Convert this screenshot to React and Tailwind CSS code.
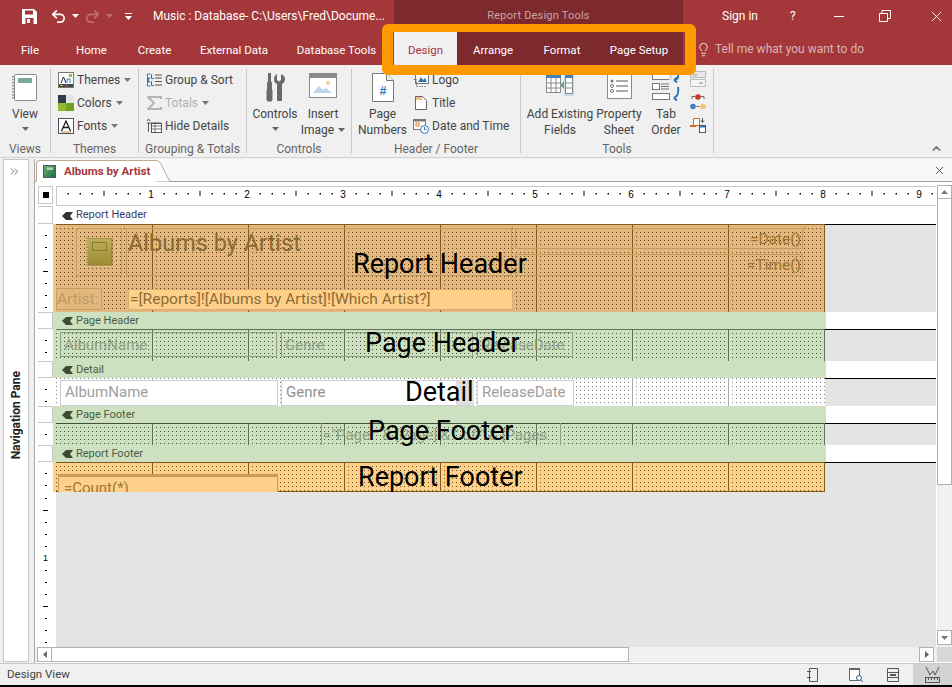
import { Undo2, Redo2, Lightbulb, X, ChevronsRight, ChevronUp } from "lucide-react";

const Caret = ({ className = "" }) => (
    <svg width="7" height="4" viewBox="0 0 7 4" className={className}>
        <path d="M0 0h7L3.5 4z" fill="currentColor" />
    </svg>
);

// ======= ribbon icons ======
const ViewIcon = () => (
    <svg width="26" height="30" viewBox="0 0 26 30">
        <rect x="2.5" y="1.5" width="22" height="26" rx="1" fill="#fff" stroke="#8a8a8a" />
        <rect x="6" y="5" width="14" height="5" fill="#77aa99" />
        <path d="M1 3v24" stroke="#999" strokeWidth="2" strokeDasharray="1.5 1.5" />
    </svg>
);
const ThemesIcon = () => (
    <svg width="16" height="16" viewBox="0 0 16 16">
        <rect x="0.5" y="0.5" width="15" height="15" fill="#fff" stroke="#777" />
        <path d="M1 12h14v3H1z" fill="#3c4a52" />
        <path d="M3 11l2.5-6L8 11" fill="none" stroke="#222" />
        <path d="M9 11V7h3v4" fill="none" stroke="#2f7fbf" />
        <path d="M11 2h3v3h-3z" fill="#8fbc3a" />
        <path d="M2 13h3v1H2z" fill="#e8b030" />
        <path d="M7 13h3v1H7z" fill="#d04a2a" />
    </svg>
);
const ColorsIcon = () => (
    <svg width="16" height="16" viewBox="0 0 16 16">
        <path d="M0 0h8v8H0z" fill="#2f3f48" />
        <path d="M8 0h8v8H8z" fill="#e4e4e4" />
        <path d="M0 8h8v8H0z" fill="#8fbc2a" />
        <path d="M8 8h8v8H8z" fill="#6fa020" />
    </svg>
);
const FontsIcon = () => (
    <svg width="16" height="16" viewBox="0 0 16 16">
        <rect x="0.5" y="0.5" width="15" height="15" fill="#fff" stroke="#44546a" />
        <path d="M3.5 13L8 3l4.5 10M5.5 9.5h5" fill="none" stroke="#1a1a1a" strokeWidth="1.3" />
        <path d="M3 14h10" stroke="#c8892a" />
    </svg>
);
const GroupSortIcon = () => (
    <svg width="15" height="14" viewBox="0 0 15 14">
        <path d="M3.5 1H.5v12h3M3.5 5h-2v4h2" fill="none" stroke="#2f75b5" />
        <path d="M5 1.5h-.5v4H7M5 8.5h-.5v4H7" fill="none" stroke="#2f75b5" />
        <path d="M8 2h7M8 5h7M8 8.500h7M8 12h7" stroke="#555" />
    </svg>
);
const TotalsIcon = () => (
    <svg width="15" height="14" viewBox="0 0 15 14">
        <path d="M14 3V1H1l6 6-6 6h13v-2" fill="none" stroke="#b4b4b4" strokeWidth="2" />
    </svg>
);
const HideDetailsIcon = () => (
    <svg width="16" height="16" viewBox="0 0 16 16">
        <path d="M1 5h14M2.500 5v9M1 3l1.500-2L4 3" fill="none" stroke="#555" />
        <rect x="5.500" y="5.500" width="10" height="9" fill="#fff" stroke="#555" />
        <path d="M6 8h9M6 11h9M9 6v8" stroke="#777" />
    </svg>
);
const ControlsIcon = () => (
    <svg width="20" height="29" viewBox="0 0 20 29">
        <path d="M3 0h3v8l1 2v7H2v-7l1-2z" fill="#6a6a6a" />
        <path d="M1.500 17h6v9.500l-1 2h-4l-1-2z" fill="#6a6a6a" />
        <path d="M12 1v6l2 1.500L16 7V1c3 1 4 3 4 5 0 3-1.500 4-3 5v17h-5V11c-2-1-3-2-3-5 0-2 1-4 3-5z" fill="#6a6a6a" />
    </svg>
);
const InsertImageIcon = () => (
    <svg width="28" height="26" viewBox="0 0 28 26">
        <rect x="0.500" y="0.500" width="27" height="24" fill="#fff" stroke="#8a8a8a" />
        <rect x="1" y="1" width="26" height="4" fill="#8a8a8a" />
        <path d="M4 20l6-7 4 4 3-2 6 5z" fill="#bcd3ea" />
        <circle cx="19" cy="10" r="2.200" fill="#f2d6a2" />
    </svg>
);
const PageNumbersIcon = () => (
    <svg width="22" height="29" viewBox="0 0 22 29">
        <path d="M.500.500h14l7 7v21H.500z" fill="#fff" stroke="#7a7a7a" />
        <path d="M14.500.500v7h7" fill="#f0f0f0" stroke="#7a7a7a" />
        <text x="11" y="22" textAnchor="middle" fontSize="12" fontWeight="700" fill="#2f75b5" fontFamily="Liberation Sans">#</text>
    </svg>
);
const LogoIcon = () => (
    <svg width="16" height="14" viewBox="0 0 16 14">
        <rect x="2.500" y="1.500" width="13" height="9" fill="#fff" stroke="#777" />
        <path d="M5 9l3-5 2 3 2-2 2 4z" fill="#2f75b5" />
        <path d="M.5 6.500h3v7h9" fill="none" stroke="#777" strokeDasharray="1.500 1" />
    </svg>
);
const TitleIcon = () => (
    <svg width="12" height="14" viewBox="0 0 12 14">
        <path d="M.500.500h7l4 4v9H.500z" fill="#fff" stroke="#666" />
        <path d="M1 1h6v3H1z" fill="#f2c28a" />
    </svg>
);
const DateTimeIcon = () => (
    <svg width="16" height="16" viewBox="0 0 16 16">
        <rect x="0.500" y="1.500" width="12" height="10" fill="#fff" stroke="#777" />
        <rect x="1" y="1" width="11" height="2.500" fill="#777" />
        <rect x="3" y="5" width="3" height="3" fill="none" stroke="#e07a20" />
        <circle cx="11.500" cy="11.500" r="4" fill="#fff" stroke="#2f75b5" />
        <path d="M11.500 9v2.500h2" fill="none" stroke="#2f75b5" />
    </svg>
);
const AddFieldsIcon = () => (
    <svg width="28" height="24" viewBox="0 0 28 24">
        <rect x="0.500" y="1.500" width="14" height="18" fill="#fff" stroke="#8a8a8a" />
        <rect x="0" y="1" width="15" height="4" fill="#4a7fb5" />
        <path d="M0 10h15M0 15h15M5 5v15M10 5v15" stroke="#8a8a8a" />
        <path d="M14 12l4-4v8z" fill="#6fa890" />
        <rect x="18" y="0" width="10" height="23" fill="#c9dcec" />
        <rect x="19.500" y="1.500" width="7" height="19" fill="#fff" stroke="#8a8a8a" />
        <rect x="19" y="1" width="8" height="4" fill="#4a7fb5" />
        <path d="M20 10h6M20 15h6" stroke="#8a8a8a" />
    </svg>
);
const PropertySheetIcon = () => (
    <svg width="25" height="26" viewBox="0 0 25 26">
        <rect x="0.500" y="0.500" width="24" height="25" fill="#fff" stroke="#8a8a8a" />
        <rect x="0" y="0" width="25" height="2" fill="#4a7fb5" />
        <circle cx="5" cy="8" r="1.500" fill="#777" />
        <circle cx="5" cy="13" r="1.500" fill="none" stroke="#777" />
        <circle cx="5" cy="18" r="1.500" fill="none" stroke="#777" />
        <path d="M9 8h12M9 13h12M9 18h12" stroke="#555" />
    </svg>
);
const TabOrderIcon = () => (
    <svg width="28" height="28" viewBox="0 0 28 28">
        <rect x="0.500" y="0.500" width="17" height="6" fill="#fff" stroke="#777" />
        <rect x="17" y="0" width="3" height="7" fill="#c9dcec" />
        <rect x="0.500" y="10.500" width="7" height="6" fill="#fff" stroke="#777" />
        <path d="M9 11h8M9 13.500h8M9 16h8" stroke="#777" />
        <rect x="0.500" y="20.500" width="17" height="6" fill="#fff" stroke="#777" />
        <path d="M26 1c1 4-1 6-4 6M22 7l3-2.500M22 7l3 2.500" fill="none" stroke="#2f75b5" strokeWidth="2" />
        <path d="M26 14c1 6-1 10-4 11M22 25l3-2.500M22 25l3 2.500" fill="none" stroke="#2f75b5" strokeWidth="2" />
    </svg>
);
const Tool1Icon = () => (
    <svg width="16" height="16" viewBox="0 0 16 16">
        <rect x="0.500" y="0.500" width="15" height="6" fill="#e8e8e8" stroke="#bbb" />
        <rect x="0.500" y="8.500" width="15" height="7" fill="#f4f4f4" stroke="#bbb" />
        <rect x="3" y="3" width="4" height="2" fill="#bbb" />
        <rect x="9" y="11" width="4" height="2" fill="#bbb" />
    </svg>
);
const Tool2Icon = () => (
    <svg width="16" height="16" viewBox="0 0 16 16">
        <path d="M2 5V2.500h3M14 5V2.500h-3" fill="none" stroke="#666" />
        <circle cx="8" cy="3" r="2.800" fill="#c8372a" />
        <circle cx="3" cy="12.500" r="2.800" fill="#3f7fbf" />
        <circle cx="13" cy="12.500" r="2.800" fill="#f2c67a" />
        <path d="M6.500 12.500h3" stroke="#666" />
    </svg>
);
const Tool3Icon = () => (
    <svg width="16" height="16" viewBox="0 0 16 16">
        <path d="M3.500 1.500h6v7h-6z" fill="#fff" stroke="#e0661a" />
        <path d="M0 8h6v2H0z" fill="#e0661a" />
        <path d="M12.500 1v4M11 3.500l1.500 2 1.500-2" fill="none" stroke="#555" />
        <rect x="9.500" y="8.500" width="6" height="7" fill="#fff" stroke="#555" />
        <rect x="9.500" y="8.500" width="6" height="2" fill="#2f75b5" />
    </svg>
);

// ======= ribbon parts ======
const RibbonGroup = ({ label, width, children }) => (
    <section className={`flex flex-col h-[84px] mt-1 border-r border-[#c8c8c8] ${width}`}>
        <div className="flex-1 flex min-h-0">{children}</div>
        <p className="text-center text-[12px] leading-4 -mb-1 text-[#666] whitespace-nowrap">{label}</p>
    </section>
);

const LargeButton = ({ icon, lines, caret, inlineCaret, width }) => (
    <button className={`flex flex-col items-center text-[12px] leading-4 text-[#444] ${width}`}>
        <span className="h-[37px] pt-1 flex items-start justify-center">{icon}</span>
        {lines.map((line, i) => (
            <span key={line} className="flex items-center gap-1 whitespace-nowrap">
                {line}
                {inlineCaret && i === lines.length - 1 && <Caret className="text-[#666]" />}
            </span>
        ))}
        {caret && <Caret className="text-[#666] mt-[5px]" />}
    </button>
);

const SmallButton = ({ icon, label, caret, disabled, iconWidth = "w-4" }) => (
    <button className={`flex items-center gap-[3px] h-[23px] text-[12px] whitespace-nowrap ${disabled ? "text-[#b0b0b0]" : "text-[#444]"}`}>
        <span className={`flex justify-center ${iconWidth}`}>{icon}</span>
        <span>{label}</span>
        {caret && <Caret className="text-[#777] ml-[1px]" />}
    </button>
);

// ======= design surface ======
const gridLines = [96, 192, 288, 384, 480, 576, 672];

// the dot colour is the base, two gradient layers cover everything but one pixel of each 4px tile
const bands = {
    tan: "bg-[#5a3e1a] bg-[linear-gradient(to_right,transparent_1px,#e3b77d_1px),linear-gradient(to_bottom,transparent_1px,#e3b77d_1px)] bg-size-[4px_4px]",
    green: "bg-[#44543c] bg-[linear-gradient(to_right,transparent_1px,#cde0bf_1px),linear-gradient(to_bottom,transparent_1px,#cde0bf_1px)] bg-size-[4px_4px]",
    white: "bg-[#808080] bg-[linear-gradient(to_right,transparent_1px,#ffffff_1px),linear-gradient(to_bottom,transparent_1px,#ffffff_1px)] bg-size-[4px_4px]",
    orange: "bg-[#6a5020] bg-[linear-gradient(to_right,transparent_1px,#ffd08a_1px),linear-gradient(to_bottom,transparent_1px,#ffd08a_1px)] bg-size-[4px_4px]",
};

const RulerTicks = ({ count, longAt = 4 }) => (
    <div className="flex flex-col items-center pt-[11px] gap-[11px]">
        {Array.from({ length: count }, (_, i) => (
            <i key={i} className={`block h-px bg-black ${(i + 1) % 8 === longAt ? "w-[5px]" : "w-[2px]"}`} />
        ))}
    </div>
);

const SectionBar = ({ title, tinted, barHeight }) => (
    <div className={`flex ${barHeight}`}>
        <div className="w-[15px] shrink-0 bg-white border border-[#c8c8c8] border-l-0" />
        <div className={`w-[3px] shrink-0 ${tinted ? "bg-[#cde0bf]" : "bg-white"}`} />
        <div className={`w-[770px] shrink-0 flex items-center pl-[6px] pt-px gap-[3px] text-[11px] ${tinted ? "bg-[#cde0bf] text-[#4c5c44]" : "bg-white text-[#3c3c60]"}`}>
            <svg width="11" height="10" viewBox="0 0 11 10">
                <path d="M0 5l4-4h7L8 5l3 4H4z" fill={tinted ? "#3d4a36" : "#333"} />
            </svg>
            {title}
        </div>
        <div className="flex-1 bg-white" />
    </div>
);

const SectionBody = ({ height, tone, lineColor, ticks, edge, children, topLine = "border-black" }) => (
    <div className={`flex ${height}`}>
        <div className="w-[15px] shrink-0 bg-white">
            <RulerTicks count={ticks} />
        </div>
        <div className={`w-[3px] shrink-0 ${edge}`} />
        <div className={`relative w-[769px] shrink-0 ${bands[tone]}`}>
            {gridLines.map((x) => (
                <i key={x} className={`absolute top-0 bottom-0 w-px ${lineColor}`} style={{ left: x }} />
            ))}
            {children}
        </div>
        <div className={`flex-1 bg-[#e4e4e4] border-t ${topLine}`} />
    </div>
);

const BigLabel = ({ text, className }) => (
    <span className={`absolute z-10 text-[27px] leading-none text-black whitespace-nowrap ${className}`}>{text}</span>
);

const Horizontal = () => {
    const ticks = [];
    for (let i = 1; i <= 73; i++) {
        const x = i * 12;
        if (i % 8 === 0) continue;
        ticks.push(i % 4 === 0
            ? <rect key={i} x={x - 0.5} y="4" width="1" height="5" fill="#000" />
            : <rect key={i} x={x - 0.5} y="6" width="1.500" height="1.500" fill="#000" />);
    }
    return (
        <svg width="880" height="18" viewBox="0 0 880 18" className="block -ml-px">
            {ticks}
            {[1, 2, 3, 4, 5, 6, 7, 8, 9].map((n) => (
                <text key={n} x={n * 96 - 1} y="11" textAnchor="middle" fontSize="10" fill="#000" fontFamily="Liberation Sans">{n}</text>
            ))}
        </svg>
    );
};

const App = () => {
    return (
        <div className="w-[952px] h-[687px] relative overflow-hidden flex flex-col bg-[#f0f0f0] font-['Roboto',sans-serif]">
            {/* ======= title bar ====== */}
            <header className="h-8 flex bg-[#a4373a] text-white">
                <div className="w-[394px] flex items-center relative">
                    <svg width="15" height="15" viewBox="0 0 15 15" className="ml-[22px]">
                        <path d="M0 0h12l3 3v12H0z" fill="#fff" />
                        <path d="M3 1.500h8v4H3zM3.500 9h8v6h-8z" fill="#a4373a" />
                        <path d="M5 10h3v4H5z" fill="#fff" />
                    </svg>
                    <Undo2 size={17} strokeWidth={2.4} className="ml-[13px]" />
                    <Caret className="ml-[5px]" />
                    <Redo2 size={17} strokeWidth={2.4} className="ml-[5px] text-[#bf6d6f]" />
                    <Caret className="ml-[5px] text-[#bf6d6f]" />
                    <svg width="7" height="7" viewBox="0 0 7 7" className="ml-[12px]">
                        <path d="M0 0h7v1H0zM0 3h7L3.500 7z" fill="#fff" />
                    </svg>
                    <span className="ml-[21px] text-[12px] whitespace-nowrap">Music : Database- C:\Users\Fred\Docume...</span>
                </div>
                <div className="w-[289px] bg-[#7d2a2e] flex items-center justify-center text-[11px] tracking-[0.2px] text-[#c9a3a4]">Report Design Tools</div>
                <div className="flex-1 flex items-center text-[12px]">
                    <span className="ml-[39px]">Sign in</span>
                    <span className="ml-[32px]">?</span>
                    <i className="ml-[38px] w-[10px] h-px bg-white" />
                    <svg width="12" height="12" viewBox="0 0 12 12" className="ml-[35px]">
                        <path d="M.5 3.500h8v8h-8zM3 3.500V.5h8.500v8h-3" fill="none" stroke="#fff" />
                    </svg>
                    <X size={17} strokeWidth={1.2} className="ml-[37px]" />
                </div>
            </header>

            {/* ======= tabs ====== */}
            <nav className="h-[33px] flex bg-[#a4373a] text-white text-[11.5px] text-center">
                <a className="w-[60px] leading-[36px]">File</a>
                <a className="w-[63px] leading-[36px]">Home</a>
                <a className="w-[63px] leading-[36px]">Create</a>
                <a className="w-[96px] leading-[36px]">External Data</a>
                <a className="w-[112px] leading-[36px] pr-[3px]">Database Tools</a>
                <div className="flex bg-[#7d2a2e]">
                    <a className="w-[63px] leading-[36px] bg-[#f0f0f0] text-[#a4373a]">Design</a>
                    <a className="w-[72px] leading-[36px]">Arrange</a>
                    <a className="w-[66px] leading-[36px]">Format</a>
                    <a className="w-[88px] leading-[36px]">Page Setup</a>
                </div>
                <div className="flex items-center ml-[13px] pt-px text-[12px] text-[#d9b5b6]">
                    <Lightbulb size={15} strokeWidth={1.3} className="text-white" />
                    <span className="ml-[4px] whitespace-nowrap">Tell me what you want to do</span>
                </div>
            </nav>

            {/* ======= ribbon ====== */}
            <div className="h-[93px] relative flex items-start bg-[#f0f0f0] border-b border-[#d2d2d2]">
                <RibbonGroup label="Views" width="w-[51px]">
                    <LargeButton width="w-[50px]" icon={<ViewIcon />} lines={["View"]} caret />
                </RibbonGroup>
                <RibbonGroup label="Themes" width="w-[88px]">
                    <div className="flex flex-col pl-[7px] -mt-px">
                        <SmallButton icon={<ThemesIcon />} label="Themes" caret />
                        <SmallButton icon={<ColorsIcon />} label="Colors" caret />
                        <SmallButton icon={<FontsIcon />} label="Fonts" caret />
                    </div>
                </RibbonGroup>
                <RibbonGroup label="Grouping & Totals" width="w-[108px]">
                    <div className="flex flex-col pl-[7px] -mt-px">
                        <SmallButton icon={<GroupSortIcon />} label="Group & Sort" />
                        <SmallButton icon={<TotalsIcon />} label="Totals" caret disabled />
                        <SmallButton icon={<HideDetailsIcon />} label="Hide Details" />
                    </div>
                </RibbonGroup>
                <RibbonGroup label="Controls" width="w-[105px]">
                    <LargeButton width="w-[56px]" icon={<ControlsIcon />} lines={["Controls"]} caret />
                    <LargeButton width="w-[40px]" icon={<InsertImageIcon />} lines={["Insert", "Image"]} inlineCaret />
                </RibbonGroup>
                <RibbonGroup label="Header / Footer" width="w-[169px]">
                    <LargeButton width="w-[61px]" icon={<PageNumbersIcon />} lines={["Page", "Numbers"]} />
                    <div className="flex flex-col -mt-px">
                        <SmallButton icon={<LogoIcon />} label="Logo" />
                        <SmallButton icon={<TitleIcon />} label="Title" />
                        <SmallButton icon={<DateTimeIcon />} label="Date and Time" />
                    </div>
                </RibbonGroup>
                <RibbonGroup label="Tools" width="w-[193px]">
                    <LargeButton width="w-[78px]" icon={<AddFieldsIcon />} lines={["Add Existing", "Fields"]} />
                    <LargeButton width="w-[40px]" icon={<PropertySheetIcon />} lines={["Property", "Sheet"]} />
                    <LargeButton width="w-[54px]" icon={<TabOrderIcon />} lines={["Tab", "Order"]} />
                    <div className="flex flex-col gap-[7px] pt-[2px] -ml-[3px]">
                        <Tool1Icon />
                        <Tool2Icon />
                        <Tool3Icon />
                    </div>
                </RibbonGroup>
                <ChevronUp size={13} strokeWidth={3} className="absolute right-[9px] bottom-[2px] text-[#777]" />
            </div>

            {/* ======= workspace ====== */}
            <div className="flex-1 min-h-0 flex bg-[#f0f0f0]">
                {/* ======= navigation pane ====== */}
                <aside className="w-[26px] ml-[3px] mt-[1px] mb-px shrink-0 bg-white border border-[#c6c6c6] flex flex-col items-center">
                    <ChevronsRight size={13} strokeWidth={1.5} className="mt-[5px] -ml-1 text-[#555]" />
                    <span className="mt-[193px] rotate-180 [writing-mode:vertical-rl] text-[12px] font-bold text-[#222] whitespace-nowrap">Navigation Pane</span>
                </aside>
                <div className="w-[5px] shrink-0" />
                <main className="flex-1 min-w-0 flex flex-col border-l border-[#a9a9a9] mt-[1px]">
                    {/* ======= document tab ====== */}
                    <div className="h-[23px] flex items-end bg-[#f7f7f7] border-b border-[#a0a0a0] relative">
                        <div className="h-[22px] w-[120px] ml-px flex items-center bg-white border-t border-l border-[#bda98f] rounded-tl-sm -mb-px">
                            <svg width="13" height="13" viewBox="0 0 13 13" className="ml-[6px]">
                                <defs>
                                    <linearGradient id="tabBook" x1="0" y1="0" x2="1" y2="1">
                                        <stop offset="0" stopColor="#6cb27d" />
                                        <stop offset="1" stopColor="#1d6a3a" />
                                    </linearGradient>
                                </defs>
                                <rect x="0.500" y="0.500" width="12" height="12" fill="url(#tabBook)" stroke="#555" />
                                <rect x="4" y="2.500" width="6" height="2.500" fill="#a9d5b5" />
                            </svg>
                            <span className="ml-[8px] text-[11.5px] font-bold text-[#a4373a] whitespace-nowrap">Albums by Artist</span>
                        </div>
                        <svg width="14" height="22" viewBox="0 0 14 22" className="-mb-px">
                            <path d="M0 0C5 0 6 8 14 21.500H0z" fill="#fff" />
                            <path d="M0 .5C5 .5 6 8 14 21.500" fill="none" stroke="#a8a8a8" />
                        </svg>
                        <X size={13} strokeWidth={1.6} className="absolute right-[6px] top-[5px] text-[#444]" />
                    </div>

                    <div className="flex-1 min-h-0 flex flex-col bg-white">
                        <div className="flex-1 min-h-0 flex pl-[3px]">
                            <div className="w-[898px] shrink-0 flex flex-col pt-[4px]">
                                {/* ======= horizontal ruler ====== */}
                                <div className="h-[20px] flex shrink-0">
                                    <div className="w-[15px] h-[18px] mr-[3px] shrink-0 flex items-center justify-center border border-[#c8c8c8] bg-white">
                                        <i className="block w-[6px] h-[6px] bg-black" />
                                    </div>
                                    <div className="flex-1 h-[20px] overflow-hidden border-y border-[#c8c8c8] border-l bg-white">
                                        <Horizontal />
                                    </div>
                                </div>

                                {/* ======= report sections ====== */}
                                <SectionBar title="Report Header" barHeight="h-[18px]" />
                                <SectionBody height="h-[88px]" tone="tan" lineColor="bg-[#83591d]" ticks={7} edge="bg-[#f4c68c]">
                                    <i className="absolute inset-x-0 top-0 h-px bg-[#83591d]" />
                                    <i className="absolute right-0 inset-y-0 w-px bg-[#83591d]" />
                                    <div className="absolute left-[20px] top-[4px] w-[46px] h-[48px] border border-[#c79c63] flex items-center justify-center">
                                        <svg width="27" height="28" viewBox="0 0 27 28">
                                            <defs>
                                                <linearGradient id="logoBook" x1="0" y1="0" x2="0" y2="1">
                                                    <stop offset="0" stopColor="#c0ae5c" />
                                                    <stop offset="1" stopColor="#9c8c34" />
                                                </linearGradient>
                                            </defs>
                                            <rect x="1" y="0" width="25" height="27" fill="url(#logoBook)" stroke="#8a7a30" />
                                            <rect x="6.500" y="4.500" width="14" height="8" fill="none" stroke="#8a7a30" />
                                            <path d="M1 1v26" stroke="#e0d69a" strokeWidth="1.500" strokeDasharray="1.500 1.500" />
                                        </svg>
                                    </div>
                                    <div className="absolute left-[70px] top-[4px] w-[386px] h-[48px] border border-[#c79c63] px-[1px] text-[23.5px] leading-[29px] text-[#8a6a34] whitespace-nowrap">Albums by Artist</div>
                                    <div className="absolute left-[459px] top-[4px] w-[288px] h-[21px] border border-[#c79c63] text-right pr-[1px] text-[15.5px] leading-[20px] text-[#9b7434]">=Date()</div>
                                    <div className="absolute left-[459px] top-[30px] w-[288px] h-[22px] border border-[#c79c63] text-right pr-[1px] text-[15.5px] leading-[21px] text-[#9b7434]">=Time()</div>
                                    <div className="absolute left-0 top-[64px] w-[46px] h-[22px] border border-[#c79c63] bg-[#e3b77d] text-[15.5px] leading-[21px] text-[#c0995f] overflow-hidden">Artist:</div>
                                    <div className="absolute left-[72px] top-[65px] w-[385px] h-[21px] border border-[#d9ac70] bg-[#ffd08a] pl-[1px] text-[15.5px] leading-[19px] text-[#8c6c34] whitespace-nowrap">=[Reports]![Albums by Artist]![Which Artist?]</div>
                                    <BigLabel text="Report Header" className="left-[297px] top-[27px]" />
                                </SectionBody>
                                <SectionBar title="Page Header" tinted barHeight="h-[17px]" />
                                <SectionBody height="h-[32px]" tone="green" lineColor="bg-[#5f7058]" ticks={2} edge="bg-[#cde0bf]">
                                    <i className="absolute inset-x-0 top-0 h-px bg-[#5f7058]" />
                                    <i className="absolute right-0 inset-y-0 w-px bg-[#5f7058]" />
                                    <div className="absolute left-[4px] top-[3px] w-[217px] h-[25px] border border-[#8ea082] pl-[3px] text-[15px] leading-[24px] text-[#8ea082]">AlbumName</div>
                                    <div className="absolute left-[225px] top-[3px] w-[192px] h-[25px] border border-[#8ea082] pl-[3px] text-[15px] leading-[24px] text-[#8ea082]">Genre</div>
                                    <div className="absolute left-[421px] top-[3px] w-[96px] h-[25px] border border-[#8ea082] pl-[3px] text-[15px] leading-[24px] text-[#8ea082]">ReleaseDate</div>
                                    <BigLabel text="Page Header" className="left-[309px] top-[1px]" />
                                </SectionBody>
                                <SectionBar title="Detail" tinted barHeight="h-[17px]" />
                                <SectionBody height="h-[28px]" tone="white" lineColor="bg-[#a8a8a8]" ticks={2} edge="bg-white">
                                    <div className="absolute left-[4px] top-[2px] w-[218px] h-[26px] bg-white border border-[#cfcfcf] pl-[4px] text-[15px] leading-[23px] text-[#a0a0a0]">AlbumName</div>
                                    <div className="absolute left-[225px] top-[2px] w-[193px] h-[26px] bg-white border border-[#cfcfcf] pl-[4px] text-[15px] leading-[23px] text-[#909090]">Genre</div>
                                    <div className="absolute left-[400px] top-[3px] w-[18px] h-[24px] bg-[#dfdfdf]" />
                                    <div className="absolute left-[421px] top-[2px] w-[97px] h-[26px] bg-white border border-[#cfcfcf] pl-[4px] text-[15px] leading-[23px] text-[#a0a0a0]">ReleaseDate</div>
                                    <BigLabel text="Detail" className="left-[349px] top-[1px]" />
                                </SectionBody>
                                <SectionBar title="Page Footer" tinted barHeight="h-[17px]" />
                                <SectionBody height="h-[22px]" tone="green" lineColor="bg-[#5f7058]" ticks={1} edge="bg-[#cde0bf]">
                                    <i className="absolute inset-x-0 top-0 h-px bg-[#3f5038]" />
                                    <i className="absolute right-0 inset-y-0 w-px bg-[#5f7058]" />
                                    <div className="absolute left-[265px] top-0 w-[240px] h-[22px] border-x border-[#8ea082] pl-[1px] text-[15px] leading-[24px] text-[#8ea082] whitespace-nowrap overflow-hidden">="Page " &amp; [Page] &amp; " of " &amp; [Pages</div>
                                    <BigLabel text="Page Footer" className="left-[312px] top-[-5px]" />
                                </SectionBody>
                                <SectionBar title="Report Footer" tinted barHeight="h-[17px]" />
                                <SectionBody height="h-[30px]" tone="orange" lineColor="bg-[#83591d]" ticks={2} edge="bg-[#ffd08a]">
                                    <i className="absolute inset-x-0 top-0 h-px bg-[#83591d]" />
                                    <i className="absolute inset-x-0 bottom-0 h-px bg-[#83591d]" />
                                    <i className="absolute right-0 inset-y-0 w-px bg-[#83591d]" />
                                    <div className="absolute left-[2px] top-[12px] w-[220px] h-[18px] border-t-[3px] border-l border-r border-[#c99a5c] bg-[#ffd08a] pl-[5px] text-[15px] leading-[22px] text-[#9c7636] overflow-hidden">=Count(*)</div>
                                    <BigLabel text="Report Footer" className="left-[302px] top-[2px]" />
                                </SectionBody>

                                {/* ======= empty canvas below the report ====== */}
                                <div className="flex-1 min-h-0 flex overflow-hidden">
                                    <div className="w-[15px] shrink-0 bg-white">
                                        <div className="flex flex-col items-center gap-[11px] pt-[6px]">
                                            {Array.from({ length: 13 }, (_, i) => {
                                                if (i === 5) return <span key={i} className="h-px flex items-center text-[9px] font-['Liberation_Sans',sans-serif]">1</span>;
                                                return <i key={i} className={`block h-px bg-black ${i === 1 || i === 9 ? "w-[5px]" : "w-[2px]"}`} />;
                                            })}
                                        </div>
                                    </div>
                                    <div className="w-[3px] shrink-0 bg-white" />
                                    <div className="flex-1 bg-[#e4e4e4]" />
                                </div>
                            </div>

                            {/* ======= vertical scrollbar ====== */}
                            <div className="w-[15px] ml-px mt-[3px] flex flex-col bg-[#f0f0f0]">
                                <div className="h-[14px] flex items-center justify-center border border-[#b0b0b0] bg-white text-[#777]">
                                    <svg width="7" height="4" viewBox="0 0 7 4"><path d="M3.500 0L7 4H0z" fill="currentColor" /></svg>
                                </div>
                                <div className="h-[286px] border-x border-b border-[#b0b0b0] bg-white" />
                                <div className="flex-1" />
                                <div className="h-[15px] mb-[2px] flex items-center justify-center border border-[#b0b0b0] bg-white text-[#777]">
                                    <Caret />
                                </div>
                            </div>
                        </div>

                        {/* ======= horizontal scrollbar ====== */}
                        <div className="h-[15px] mb-px shrink-0 flex bg-[#f0f0f0] pl-[2px]">
                            <div className="w-[15px] flex items-center justify-center border border-[#b0b0b0] bg-white">
                                <svg width="4" height="7" viewBox="0 0 4 7"><path d="M0 3.500L4 0v7z" fill="#666" /></svg>
                            </div>
                            <div className="w-[577px] border-y border-r border-[#b0b0b0] bg-white" />
                            <div className="w-[290px]" />
                            <div className="w-[15px] flex items-center justify-center border border-[#b0b0b0] bg-white">
                                <svg width="4" height="7" viewBox="0 0 4 7"><path d="M4 3.500L0 0v7z" fill="#666" /></svg>
                            </div>
                            <div className="flex-1 ml-[3px] bg-[#d8d8d8]" />
                        </div>
                    </div>
                </main>
            </div>

            {/* ======= status bar ====== */}
            <footer className="h-[22px] shrink-0 flex items-center border-t border-[#c8c8c8] bg-[#f0f0f0] text-[11.5px] text-[#444]">
                <span className="ml-[7px]">Design View</span>
                <div className="ml-auto flex items-center h-full">
                    <svg width="12" height="14" viewBox="0 0 12 14">
                        <path d="M3.500.500h8v13h-8zM1 3.500h4M1 9.500h4" fill="none" stroke="#555" />
                    </svg>
                    <svg width="14" height="14" viewBox="0 0 14 14" className="ml-[31px]">
                        <path d="M.500.500h10v12H.500z" fill="#fff" stroke="#666" />
                        <path d="M0 0h11v2H0z" fill="#666" />
                        <circle cx="10" cy="10" r="2.500" fill="#fff" stroke="#2f5f8f" />
                        <path d="M12 12l2 2" stroke="#2f5f8f" />
                    </svg>
                    <svg width="12" height="14" viewBox="0 0 12 14" className="ml-[24px]">
                        <path d="M.500.500h11v13H.500zM1 4.500h10M1 9.500h10" fill="none" stroke="#555" />
                        <rect x="3" y="6" width="6" height="2" fill="#555" />
                    </svg>
                    <div className="ml-[14px] w-[39px] h-full bg-[#d2d2d2] flex items-center justify-center">
                        <svg width="15" height="17" viewBox="0 0 15 17">
                            <path d="M1 1l4 8 3-4M8 5l2 4 4-8" fill="none" stroke="#555" />
                            <rect x="0.500" y="11.500" width="14" height="5" fill="none" stroke="#555" />
                            <path d="M3.500 12v2M6.500 12v2M9.500 12v2M12.500 12v2" stroke="#555" />
                        </svg>
                    </div>
                </div>
            </footer>
            <div className="h-[2px] shrink-0 bg-black" />

            {/* ======= orange highlight drawn over the tabs ====== */}
            <div className="absolute left-[382px] top-[24px] w-[314px] h-[51px] border-x-[11px] border-t-8 border-b-10 border-[#ff9900] rounded-md pointer-events-none" />
        </div>
    );
};

export default App;
